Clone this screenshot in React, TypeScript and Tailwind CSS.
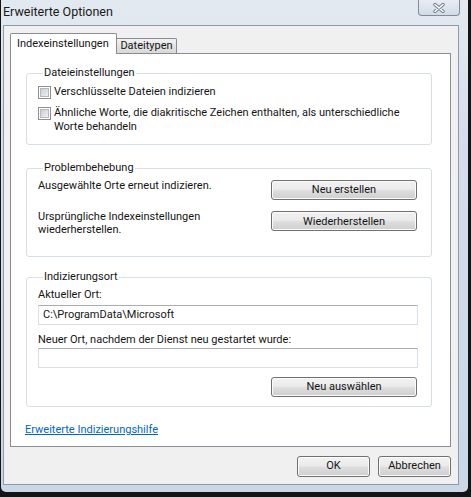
import React from 'react';

const ui = "font-['Roboto',sans-serif] text-[11px] text-[#151515]";

const Button = ({ children, className = '' }: { children: React.ReactNode; className?: string }) => (
  <div
    className={`flex h-[20px] items-center justify-center rounded-[3px] border border-[#707070] bg-[linear-gradient(#f2f2f2,#ebebeb_45%,#dddddd_55%,#cfcfcf)] shadow-[inset_0_0_0_1px_#fbfbfb] ${className}`}
  >
    {children}
  </div>
);

const Checkbox = () => (
  <div className="flex h-[13px] w-[13px] shrink-0 items-center justify-center border border-[#8f8f8f] bg-white">
    <div className="h-[9px] w-[9px] border border-[#b5b8bd] bg-[linear-gradient(135deg,#cbced3,#eef0f2)]" />
  </div>
);

const Input = ({ value = '' }: { value?: string }) => (
  <div className="flex h-[20px] items-center border border-[#dbe0e7] border-t-[#abadb3] bg-white pl-[4px] leading-[14px]">
    {value}
  </div>
);

const Group = ({ title, children, className = '' }: { title: string; children: React.ReactNode; className?: string }) => (
  <fieldset className={`rounded-[3px] border border-[#d5dfe5] ${className}`}>
    <legend className="ml-[5px] px-[1px] leading-[14px]">{title}</legend>
    {children}
  </fieldset>
);

export default function App() {
  return (
    <div className={`flex h-[497px] w-[471px] bg-[#141414] pb-[5px] pl-[1px] ${ui}`}>
      {/* Fensterrahmen */}
      <div className="flex h-[492px] w-[467px] flex-col rounded-b-[5px] bg-[linear-gradient(#e3e9f0,#d3deea_30%,#c9d7e7)]">
        {/* Titelleiste */}
        <div className="flex h-[25px] shrink-0 items-start">
          <span className="pl-[2px] pt-[4px] text-[12.5px] leading-[16px] text-[#1a1a1a]">Erweiterte Optionen</span>
          <div className="ml-auto mr-[8px] flex h-[16px] w-[42px] items-center justify-center rounded-b-[4px] border border-t-0 border-[#7f8c9c] bg-[linear-gradient(#e8edf3,#d2dbe6)]">
            <svg width="14" height="10" viewBox="0 0 14 10">
              <path d="M3 1.5 L11 8.5 M11 1.5 L3 8.5" stroke="#6f7b89" strokeWidth="3.4" strokeLinecap="round" />
              <path d="M3 1.5 L11 8.5 M11 1.5 L3 8.5" stroke="#ffffff" strokeWidth="1.6" strokeLinecap="round" />
            </svg>
          </div>
        </div>

        {/* Dialoginhalt */}
        <div className="ml-[2px] mr-[9px] flex h-[460px] flex-col border border-[#8e9bab] bg-[#f0f0f0] pl-[6px] pr-[7px] pt-[7px]">
          {/* Reiter */}
          <div className="flex items-end">
            <div className="relative z-10 -mb-px flex h-[21px] w-[107px] items-start rounded-t-[2px] border border-b-0 border-[#898c95] bg-white pl-[6px] pt-[3px] leading-[14px]">
              Indexeinstellungen
            </div>
            <div className="flex h-[15px] w-[60px] items-center justify-center rounded-tr-[2px] border border-b-0 border-l-0 border-[#898c95] bg-[linear-gradient(#f2f2f2,#e3e3e3_50%,#d9d9d9)] leading-[14px]">
              Dateitypen
            </div>
          </div>

          {/* Reiterseite */}
          <div className="flex h-[394px] flex-col border border-[#898c95] bg-white pl-[15px] pr-[18px]">
            <Group title="Dateieinstellungen" className="mt-[12px] px-[11px] pb-[10px]">
              <div className="mt-[5px] flex items-center gap-[3px] leading-[14px]">
                <Checkbox />
                <span>Verschlüsselte Dateien indizieren</span>
              </div>
              <div className="mt-[7px] flex items-start gap-[3px] leading-[14px]">
                <div className="mt-[1px]">
                  <Checkbox />
                </div>
                <span>
                  Ähnliche Worte, die diakritische Zeichen enthalten, als unterschiedliche
                  <br />
                  Worte behandeln
                </span>
              </div>
            </Group>

            <Group title="Problembehebung" className="mt-[16px] pb-[20px] pl-[11px] pr-[14px]">
              <div className="mt-[4px] flex items-start justify-between leading-[14px]">
                <span>Ausgewählte Orte erneut indizieren.</span>
                <Button className="mt-[1px] w-[146px]">Neu erstellen</Button>
              </div>
              <div className="mt-[10px] flex items-start justify-between leading-[13px]">
                <span>
                  Ursprüngliche Indexeinstellungen
                  <br />
                  wiederherstellen.
                </span>
                <Button className="mt-[1px] w-[146px]">Wiederherstellen</Button>
              </div>
            </Group>

            <Group title="Indizierungsort" className="mt-[13px] pb-[9px] pl-[11px] pr-[13px]">
              <div className="mt-[4px] leading-[14px]">Aktueller Ort:</div>
              <div className="mt-[3px]">
                <Input value="C:\ProgramData\Microsoft" />
              </div>
              <div className="mt-[8px] leading-[14px]">Neuer Ort, nachdem der Dienst neu gestartet wurde:</div>
              <div className="mt-[1px]">
                <Input />
              </div>
              <div className="mt-[9px] flex justify-end pr-px">
                <Button className="w-[146px]">Neu auswählen</Button>
              </div>
            </Group>

            <div className="-ml-px mt-[16px] leading-[14px]">
              <span className="text-[#0066cc] underline">Erweiterte Indizierungshilfe</span>
            </div>
          </div>

          {/* Dialogschaltflächen */}
          <div className="mt-[9px] flex justify-end gap-[8px]">
            <Button className="h-[21px] w-[73px]">OK</Button>
            <Button className="h-[21px] w-[73px]">Abbrechen</Button>
          </div>
        </div>
      </div>
    </div>
  );
}
